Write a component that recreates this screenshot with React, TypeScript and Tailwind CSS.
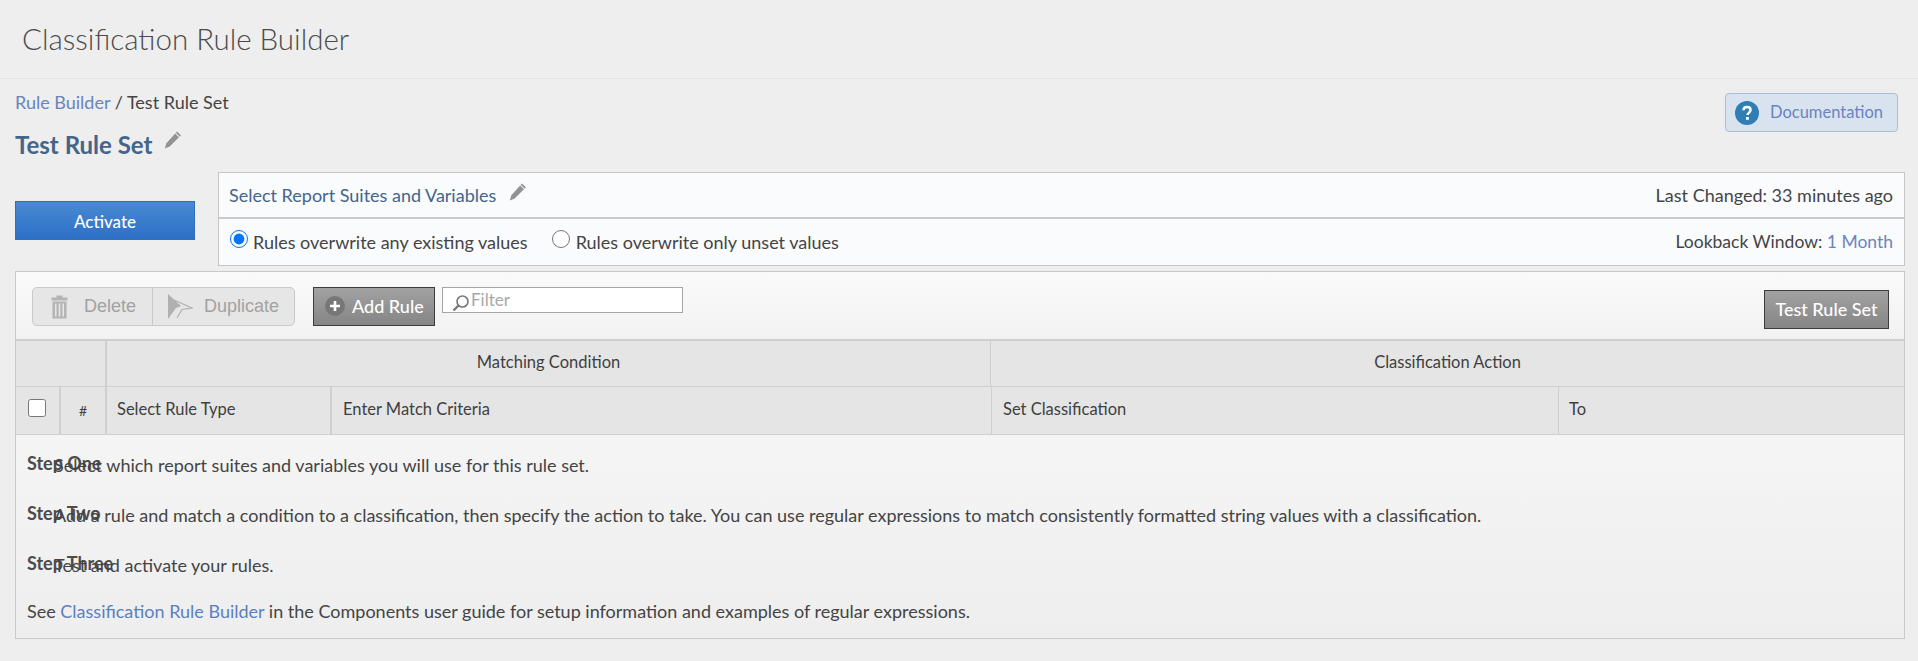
import React from 'react';

const Pencil: React.FC = () => (
  <svg width="22" height="22" viewBox="0 0 20 20" className="text-[#929292]">
    <path d="M13.6 2.2 17.2 5.6 7 16 2.5 17.8 4 13Z" fill="currentColor" />
    <path d="M12.2 3.7 15.7 7.1" stroke="#eeeeee" strokeWidth="1" />
  </svg>
);

const Trash: React.FC = () => (
  <svg width="19" height="24" viewBox="0 0 19 24" fill="#b4b4b4">
    <path d="M6.5 0.5h6v2h5v3h-16v-3h5z" />
    <path d="M2.5 6.5h14v17h-14zM5 8.5v13h1.5v-13zM8.7 8.5v13h1.6v-13zM12.5 8.5v13H14v-13z" fillRule="evenodd" />
  </svg>
);

const DuplicateIcon: React.FC = () => (
  <svg width="26" height="27" viewBox="0 0 26 27">
    <path d="M1 1 14 13 9 15 1 26Z" fill="#b0b0b0" />
    <path d="M7 7 25 15 15 16.5 10 25" fill="none" stroke="#b0b0b0" strokeWidth="1.2" />
  </svg>
);

const Step: React.FC<{ label: string; children: React.ReactNode }> = ({ label, children }) => (
  <div className="flex h-[50px] items-start">
    <b className="w-[27px] shrink-0 whitespace-nowrap text-[18px] font-bold leading-[24px] text-[#4b4b4b]">{label}</b>
    <span className="pt-[2px] leading-[24px]">{children}</span>
  </div>
);

export default function App() {
  return (
    <div className="min-h-[661px] bg-[#eeeeee] font-['Lato','Open_Sans',sans-serif] text-[18px] text-[#444444]">
      <header className="flex h-[79px] items-center border-b border-[#e2e2e2] pl-[22px]">
        <h1 className="text-[29.5px] font-light text-[#4b4b4b]">Classification Rule Builder</h1>
      </header>

      <div className="pl-[15px] pr-[13px]">
        <div className="flex items-start justify-between">
          <div>
            <div className="mt-[11px] leading-[24px]">
              <a className="text-[#6a84bd]">Rule Builder</a> / Test Rule Set
            </div>
            <div className="mt-[16px] flex items-start gap-[9px]">
              <h2 className="text-[24px] font-bold leading-[30px] text-[#44658a]">Test Rule Set</h2>
              <span className="-mt-[1px]"><Pencil /></span>
            </div>
          </div>
          <button className="mr-[7px] mt-[14px] flex h-[39px] w-[173px] items-center gap-[11px] rounded-[4px] border border-[#a9bfd5] bg-[#d8e3ef] pl-[9px] text-[16.5px] text-[#6a84bd]">
            <svg width="24" height="24" viewBox="0 0 24 24">
              <circle cx="12" cy="12" r="12" fill="#2f7fb5" />
              <path d="M8.5 9.2c0-2 1.5-3.2 3.6-3.2s3.5 1.2 3.5 3c0 2.6-3 2.6-3 5" fill="none" stroke="#fff" strokeWidth="2.4" />
              <rect x="11" y="16" width="2.8" height="2.8" fill="#fff" />
            </svg>
            Documentation
          </button>
        </div>

        <div className="mt-[12px] flex items-start gap-[23px]">
          <button className="mt-[29px] h-[39px] w-[180px] shrink-0 border border-[#2f6fb9] bg-gradient-to-b from-[#4a8ad2] to-[#2b6fc6] pt-[2px] text-[17px] font-medium text-white">
            Activate
          </button>
          <div className="flex-1 border border-[#c6c6c6] bg-[#fafbfd]">
            <div className="flex h-[46px] items-center justify-between border-b-2 border-[#c9c9c9] pl-[10px] pr-[11px]">
              <div className="flex items-center gap-[11px] text-[#44658a]">
                Select Report Suites and Variables
                <span className="-mt-[7px]"><Pencil /></span>
              </div>
              <span>Last Changed: 33 minutes ago</span>
            </div>
            <div className="flex h-[46px] items-center justify-between pl-[11px] pr-[11px]">
              <div className="flex items-center">
                <input type="radio" name="overwrite" defaultChecked className="-mt-[6px] h-[18px] w-[18px]" />
                <span className="ml-[5px]">Rules overwrite any existing values</span>
                <input type="radio" name="overwrite" className="-mt-[6px] ml-[24px] h-[18px] w-[18px]" />
                <span className="ml-[6px]">Rules overwrite only unset values</span>
              </div>
              <span className="text-[17.5px]">
                Lookback Window: <a className="text-[#6a84bd]">1 Month</a>
              </span>
            </div>
          </div>
        </div>

        <main className="mt-[5px] h-[368px] border border-[#c9c9c9] bg-gradient-to-b from-[#fafafa] to-[#eeeeee]">
          <div className="flex h-[67px] items-start bg-gradient-to-b from-[#fafafa] to-[#f2f2f2] pl-[16px] pr-[15px] pt-[15px]">
            <div className="flex h-[39px] w-[263px] rounded-[5px] border border-[#c9c9c9] bg-[#e6e6e6] font-['Liberation_Sans',sans-serif] text-[18px] text-[#a2a2a2]">
              <div className="flex w-[120px] items-center gap-[15px] border-r border-[#c9c9c9] pl-[17px]">
                <Trash />
                Delete
              </div>
              <div className="flex flex-1 items-center gap-[11px] pl-[14px]">
                <DuplicateIcon />
                Duplicate
              </div>
            </div>
            <button className="ml-[18px] flex h-[39px] w-[122px] items-center gap-[7px] border border-[#3c3c3c] bg-gradient-to-b from-[#a2a2a2] to-[#858585] pl-[11px] text-[18px] font-medium text-white">
              <span className="-mt-[2px] flex h-[20px] w-[20px] items-center justify-center rounded-full bg-[#777777]">
                <svg width="12" height="12" viewBox="0 0 12 12">
                  <path d="M6 1v10M1 6h10" stroke="#fff" strokeWidth="2.6" />
                </svg>
              </span>
              Add Rule
            </button>
            <div className="ml-[7px] flex h-[26px] w-[241px] items-start border border-[#a5a5a5] bg-white pl-[9px] text-[17px] leading-[24px] text-[#a8a8a8]">
              <svg width="18" height="18" viewBox="0 0 18 18" className="mr-[1px] mt-[6px] shrink-0">
                <circle cx="10.5" cy="7.5" r="5.5" fill="none" stroke="#777777" strokeWidth="1.6" />
                <path d="M6.5 11.5 1.5 16.5" stroke="#777777" strokeWidth="2.4" />
              </svg>
              Filter
            </div>
            <button className="ml-auto mt-[3px] h-[39px] w-[125px] border border-[#3c3c3c] bg-gradient-to-b from-[#a2a2a2] to-[#858585] text-[18px] font-medium text-white">
              Test Rule Set
            </button>
          </div>

          <div className="text-[16.5px] text-[#3f3f3f]">
            <div className="flex h-[47px] border-t-2 border-[#cfcfcf] bg-[#e5e5e5]">
              <div className="w-[91px] border-r-2 border-[#cfcfcf]" />
              <div className="flex w-[884px] items-center justify-center border-r border-[#cfcfcf] pb-[2px]">Matching Condition</div>
              <div className="flex flex-1 items-center justify-center pb-[2px]">Classification Action</div>
            </div>
            <div className="flex h-[49px] border-y border-[#cfcfcf] bg-[#e5e5e5]">
              <div className="flex w-[45px] items-center justify-center border-r-2 border-[#cfcfcf]">
                <input type="checkbox" className="-mt-[6px] -ml-[2px] h-[18px] w-[18px]" />
              </div>
              <div className="flex w-[46px] items-center justify-center border-r-2 border-[#cfcfcf] text-[14px]">#</div>
              <div className="flex w-[225px] items-center border-r-2 border-[#cfcfcf] pb-[2px] pl-[10px]">Select Rule Type</div>
              <div className="flex w-[660px] items-center border-r border-[#cfcfcf] pb-[2px] pl-[11px]">Enter Match Criteria</div>
              <div className="flex w-[567px] items-center border-r border-[#cfcfcf] pb-[2px] pl-[11px]">Set Classification</div>
              <div className="flex flex-1 items-center pb-[2px] pl-[10px]">To</div>
            </div>
          </div>

          <div className="pl-[11px] pt-[16px] text-[#444444]">
            <Step label="Step One">Select which report suites and variables you will use for this rule set.</Step>
            <Step label="Step Two">Add a rule and match a condition to a classification, then specify the action to take. You can use regular expressions to match consistently formatted string values with a classification.</Step>
            <Step label="Step Three">Test and activate your rules.</Step>
            <p className="-mt-[2px] leading-[24px]">
              See <a className="text-[#5c7fc0]">Classification Rule Builder</a> in the Components user guide for setup information and examples of regular expressions.
            </p>
          </div>
        </main>
      </div>
    </div>
  );
}
